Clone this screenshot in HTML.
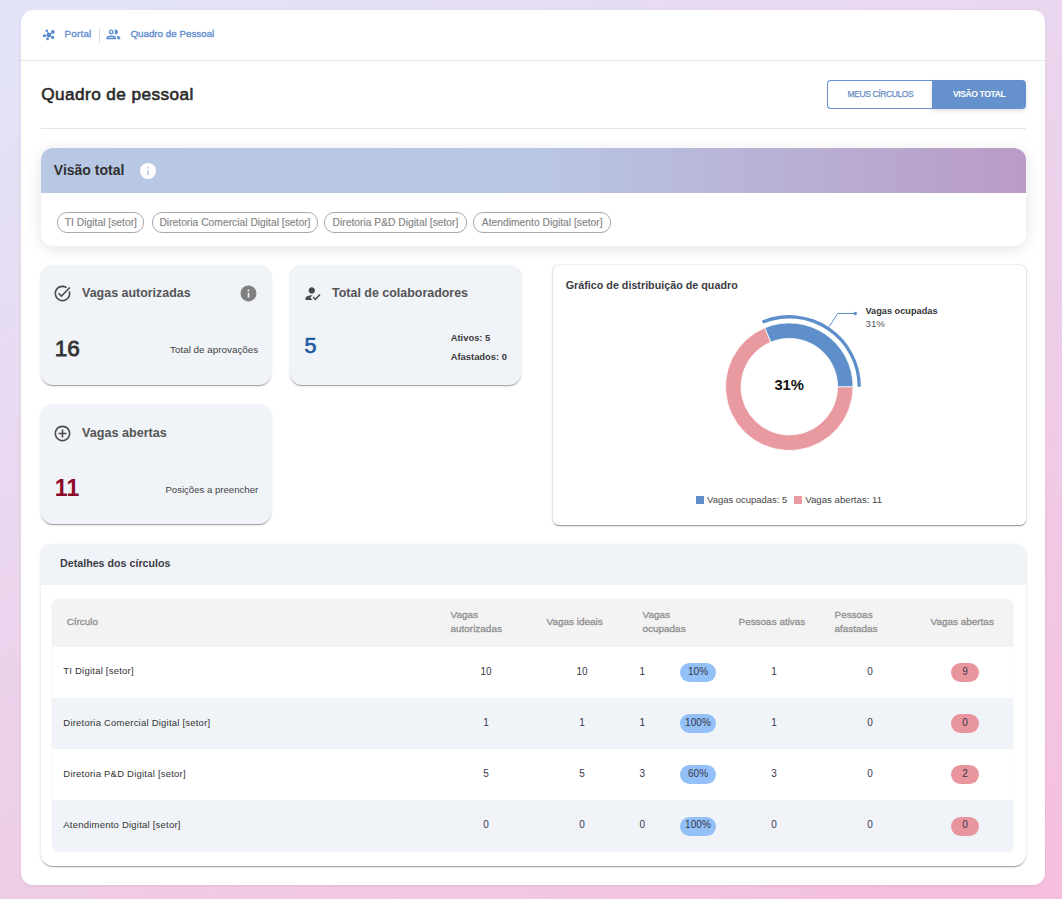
<!DOCTYPE html>
<html><head><meta charset="utf-8"><title>Quadro de pessoal</title>
<style>
html,body{margin:0;padding:0;}
body{width:1062px;height:899px;overflow:hidden;position:relative;font-family:"Liberation Sans",sans-serif;
background:linear-gradient(153deg,#e2e5f7 0%,#f6bedf 100%);}
.t{position:absolute;white-space:nowrap;}
.b{position:absolute;}
</style></head><body>
<div class="b" style="left:21px;top:10px;width:1024px;height:875px;background:#fff;border-radius:12px;box-shadow:0 1px 3px rgba(120,80,140,.12);"></div>
<div class="b" style="left:21px;top:60px;width:1024px;height:1px;background:#e4e4e4;"></div>
<svg class="b" style="left:42px;top:28px" width="14" height="13" viewBox="0 0 14 13">
<g fill="#5a8acf" stroke="#5a8acf" stroke-width="0.9">
<line x1="7" y1="6.9" x2="4.8" y2="2.7"/>
<line x1="7" y1="6.9" x2="10.8" y2="3.9"/>
<line x1="7" y1="6.9" x2="2.4" y2="7.7"/>
<line x1="7" y1="6.9" x2="5.5" y2="10.9"/>
<line x1="7" y1="6.9" x2="10.6" y2="9.4"/>
<circle cx="7" cy="6.9" r="2.3" stroke="none"/>
<circle cx="4.8" cy="2.7" r="1.3" stroke="none"/>
<circle cx="10.8" cy="3.9" r="1.9" stroke="none"/>
<circle cx="2.4" cy="7.7" r="1.5" stroke="none"/>
<circle cx="5.5" cy="10.9" r="1.4" stroke="none"/>
<circle cx="10.6" cy="9.4" r="1.6" stroke="none"/>
</g></svg>
<div class="t" style="left:64.50px;top:28.92px;font-size:9.9px;line-height:9.9px;font-weight:400;color:#5a8acf;-webkit-text-stroke:0.3px #5a8acf;letter-spacing:0.2px;">Portal</div>
<div class="b" style="left:99px;top:27.6px;width:1px;height:15px;background:#dcdcdc;"></div>
<svg class="b" style="left:105.3px;top:26.2px" width="16.7" height="16.7" viewBox="0 0 24 24"><path fill="#5b8bcf" d="M9 13.75c-2.34 0-7 1.17-7 3.5V19h14v-1.75c0-2.33-4.66-3.5-7-3.5zM4.34 17c.84-.58 2.87-1.25 4.66-1.25s3.820.67 4.66 1.25H4.34zM9 12c1.93 0 3.5-1.57 3.5-3.5S10.93 5 9 5 5.5 6.57 5.5 8.5 7.07 12 9 12zm0-5c.83 0 1.5.67 1.5 1.5S9.83 10 9 10s-1.5-.67-1.5-1.5S8.170 7 9 7zm7.04 6.81c1.16.84 1.96 1.96 1.96 3.44V19h4v-1.75c0-2.02-3.5-3.17-5.96-3.44zM15 12c1.93 0 3.5-1.57 3.5-3.5S16.93 5 15 5c-.54 0-1.04.13-1.5.35.63.89 1 1.98 1 3.15s-.37 2.26-1 3.15c.46.22.96.350 1.5.35z"/></svg>
<div class="t" style="left:130.40px;top:29.00px;font-size:9.8px;line-height:9.8px;font-weight:400;color:#5a8acf;-webkit-text-stroke:0.3px #5a8acf;">Quadro de Pessoal</div>
<div class="t" style="left:41.30px;top:85.54px;font-size:17.2px;line-height:17.2px;font-weight:400;color:#2a2a2a;-webkit-text-stroke:0.6px #2a2a2a;letter-spacing:0.42px;">Quadro de pessoal</div>
<div class="b" style="left:827px;top:80px;width:105px;height:29px;box-sizing:border-box;border:1px solid #6592cc;border-right:none;border-radius:4px 0 0 4px;background:#fff;"></div>
<div class="b" style="left:932px;top:80px;width:94px;height:29px;background:#6592cc;border-radius:0 4px 4px 0;box-shadow:0 2px 4px rgba(0,0,0,.12);"></div>
<div class="t" style="left:827.90px;width:105px;top:90.10px;font-size:8.5px;line-height:8.5px;font-weight:400;color:#6a8ec4;text-align:center;-webkit-text-stroke:0.25px #6a8ec4;letter-spacing:-0.4px;">MEUS CÍRCULOS</div>
<div class="t" style="left:932.20px;width:94px;top:90.02px;font-size:8.6px;line-height:8.6px;font-weight:700;color:#fff;text-align:center;letter-spacing:-0.4px;">VISÃO TOTAL</div>
<div class="b" style="left:41px;top:128px;width:985px;height:1px;background:#e6e6e6;"></div>
<div class="b" style="left:41px;top:148px;width:985px;height:98px;background:#fff;border-radius:12px;box-shadow:0 3px 16px rgba(0,0,0,.11);overflow:hidden;"></div>
<div class="b" style="left:41px;top:148px;width:985px;height:44.5px;border-radius:12px 12px 0 0;background:linear-gradient(90deg,#b8c8e4 0%,#b9c7e4 50%,#b99bc6 100%);"></div>
<div class="t" style="left:53.80px;top:163.15px;font-size:14px;line-height:14px;font-weight:700;color:#303030;">Visão total</div>
<svg class="b" style="left:139.6px;top:162.5px" width="16" height="16" viewBox="0 0 16 16"><circle cx="8" cy="8" r="8" fill="#fff"/><rect x="7.1" y="7.5" width="1.6" height="4.8" rx="0.8" fill="#b6c5e3"/><circle cx="7.9" cy="4.8" r="1" fill="#b6c5e3"/></svg>
<div class="b" style="left:57.4px;top:212.4px;width:87.0px;height:20.3px;box-sizing:border-box;border:1px solid #a8a8a8;border-radius:10px;"></div>
<div class="t" style="left:57.40px;width:87.0px;top:217.88px;font-size:10.3px;line-height:10.3px;font-weight:400;color:#858585;text-align:center;-webkit-text-stroke:0.15px #858585;">TI Digital [setor]</div>
<div class="b" style="left:152.3px;top:212.4px;width:165.3px;height:20.3px;box-sizing:border-box;border:1px solid #a8a8a8;border-radius:10px;"></div>
<div class="t" style="left:152.30px;width:165.3px;top:217.88px;font-size:10.3px;line-height:10.3px;font-weight:400;color:#858585;text-align:center;-webkit-text-stroke:0.15px #858585;">Diretoria Comercial Digital [setor]</div>
<div class="b" style="left:324px;top:212.4px;width:142.9px;height:20.3px;box-sizing:border-box;border:1px solid #a8a8a8;border-radius:10px;"></div>
<div class="t" style="left:324.00px;width:142.89999999999998px;top:217.88px;font-size:10.3px;line-height:10.3px;font-weight:400;color:#858585;text-align:center;-webkit-text-stroke:0.15px #858585;">Diretoria P&amp;D Digital [setor]</div>
<div class="b" style="left:473.4px;top:212.4px;width:137.6px;height:20.3px;box-sizing:border-box;border:1px solid #a8a8a8;border-radius:10px;"></div>
<div class="t" style="left:473.40px;width:137.60000000000002px;top:217.88px;font-size:10.3px;line-height:10.3px;font-weight:400;color:#858585;text-align:center;-webkit-text-stroke:0.15px #858585;">Atendimento Digital [setor]</div>
<div class="b" style="left:40.5px;top:265px;width:230.5px;height:120px;background:#f0f3f8;border-radius:12px;box-shadow:0 2px 1px -1px rgba(0,0,0,.2),0 1px 1px 0 rgba(0,0,0,.14),0 1px 3px 0 rgba(0,0,0,.12);"></div>
<div class="b" style="left:289.5px;top:265px;width:231.2px;height:120px;background:#f0f3f8;border-radius:12px;box-shadow:0 2px 1px -1px rgba(0,0,0,.2),0 1px 1px 0 rgba(0,0,0,.14),0 1px 3px 0 rgba(0,0,0,.12);"></div>
<div class="b" style="left:40.5px;top:404px;width:230.5px;height:120px;background:#f0f3f8;border-radius:12px;box-shadow:0 2px 1px -1px rgba(0,0,0,.2),0 1px 1px 0 rgba(0,0,0,.14),0 1px 3px 0 rgba(0,0,0,.12);"></div>
<svg class="b" style="left:53.25px;top:283.65px" width="19" height="19" viewBox="0 0 24 24"><path fill="#4a4a4a" d="M22 5.18 10.59 16.6l-4.24-4.24 1.41-1.41 2.83 2.83 10-10L22 5.18zm-2.21 5.04c.13.57.21 1.17.21 1.78 0 4.42-3.58 8-8 8s-8-3.58-8-8 3.58-8 8-8c1.58 0 3.04.46 4.28 1.25l1.44-1.44C16.1 2.67 14.13 2 12 2 6.48 2 2 6.48 2 12s4.48 10 10 10 10-4.48 10-10c0-1.19-.22-2.33-.6-3.39l-1.61 1.61z"/></svg>
<div class="t" style="left:82.10px;top:286.56px;font-size:12.45px;line-height:12.45px;font-weight:700;color:#555;">Vagas autorizadas</div>
<svg class="b" style="left:239px;top:284.1px" width="19" height="19" viewBox="0 0 24 24"><path fill="#808080" d="M12 2C6.48 2 2 6.48 2 12s4.48 10 10 10 10-4.48 10-10S17.52 2 12 2zm1 15h-2v-6h2v6zm0-8h-2V7h2v2z"/></svg>
<div class="t" style="left:54.80px;top:338.17px;font-size:22.6px;line-height:22.6px;font-weight:400;color:#333;-webkit-text-stroke:0.8px #333;">16</div>
<div class="t" style="right:803.80px;top:344.56px;font-size:9.85px;line-height:9.85px;font-weight:400;color:#444;text-align:right;">Total de aprovações</div>
<svg class="b" style="left:302.9px;top:283.9px" width="19.2" height="19.2" viewBox="0 0 24 24"><path fill="#4a4a4a" d="M9 17l3-2.94c-.39-.04-.68-.06-1-.06-2.67 0-8 1.34-8 4v2h9l-3-3zm2-5c2.21 0 4-1.79 4-4s-1.79-4-4-4-4 1.79-4 4 1.79 4 4 4m4.47 8.5L12 17l1.4-1.41 2.07 2.08 5.13-5.17 1.4 1.41z"/></svg>
<div class="t" style="left:332.10px;top:286.56px;font-size:12.45px;line-height:12.45px;font-weight:700;color:#555;">Total de colaboradores</div>
<div class="t" style="left:304.60px;top:336.00px;font-size:21.5px;line-height:21.5px;font-weight:400;color:#1d5b9e;-webkit-text-stroke:0.7px #1d5b9e;">5</div>
<div class="t" style="left:450.70px;top:332.74px;font-size:9.4px;line-height:9.4px;font-weight:700;color:#3a3a3a;">Ativos: 5</div>
<div class="t" style="left:450.70px;top:351.54px;font-size:9.4px;line-height:9.4px;font-weight:700;color:#3a3a3a;">Afastados: 0</div>
<svg class="b" style="left:53.2px;top:423.8px" width="19" height="19" viewBox="0 0 24 24"><path fill="#4a4a4a" d="M13 7h-2v4H7v2h4v4h2v-4h4v-2h-4V7zm-1-5C6.48 2 2 6.48 2 12s4.48 10 10 10 10-4.48 10-10S17.52 2 12 2zm0 18c-4.41 0-8-3.59-8-8s3.59-8 8-8 8 3.59 8 8-3.59 8-8 8z"/></svg>
<div class="t" style="left:82.10px;top:426.53px;font-size:12.6px;line-height:12.6px;font-weight:700;color:#555;">Vagas abertas</div>
<div class="t" style="left:54.80px;top:476.93px;font-size:23px;line-height:23px;font-weight:700;color:#8b0a2a;letter-spacing:0.3px;">11</div>
<div class="t" style="right:803.80px;top:484.77px;font-size:9.6px;line-height:9.6px;font-weight:400;color:#444;text-align:right;">Posições a preencher</div>
<div class="b" style="left:553px;top:265px;width:472.5px;height:259.5px;background:#fff;border-radius:6px;box-shadow:0 0 1.5px rgba(0,0,0,.25),0 2px 1px -1px rgba(0,0,0,.2),0 1px 1px 0 rgba(0,0,0,.14),0 1px 3px 0 rgba(0,0,0,.12);"></div>
<div class="t" style="left:565.70px;top:280.40px;font-size:10.75px;line-height:10.75px;font-weight:700;color:#3c3c44;">Gráfico de distribuição de quadro</div>
<svg class="b" style="left:0;top:0" width="1062" height="899" viewBox="0 0 1062 899"><path d="M853.10,386.70 A63.8,63.8 0 1 1 764.88,327.76 L770.82,342.08 A48.3,48.3 0 1 0 837.60,386.70 Z" fill="#e99aa1" stroke="#fff" stroke-width="0.8"/><path d="M764.88,327.76 A63.8,63.8 0 0 1 853.10,386.70 L837.60,386.70 A48.3,48.3 0 0 0 770.82,342.08 Z" fill="#5f8fcb" stroke="#fff" stroke-width="0.8"/><path d="M761.90,320.55 A71.6,71.6 0 0 1 860.90,386.70 L857.60,386.70 A68.3,68.3 0 0 0 763.16,323.60 Z" fill="#5f8fcb"/><polyline points="829,326.8 837.8,313.5 855.3,313.5" fill="none" stroke="#5f8fcb" stroke-width="1"/><circle cx="855.3" cy="313.5" r="1.7" fill="#5f8fcb"/></svg>
<div class="t" style="left:759.20px;width:60px;top:377.87px;font-size:14.8px;line-height:14.8px;font-weight:700;color:#111;text-align:center;">31%</div>
<div class="t" style="left:865.50px;top:307.01px;font-size:9.2px;line-height:9.2px;font-weight:700;color:#333;">Vagas ocupadas</div>
<div class="t" style="left:865.50px;top:318.79px;font-size:9.7px;line-height:9.7px;font-weight:400;color:#555;">31%</div>
<div class="b" style="left:696px;top:496.3px;width:8px;height:8px;background:#5f8fcb;"></div>
<div class="t" style="left:707.10px;top:495.39px;font-size:9.46px;line-height:9.46px;font-weight:400;color:#444;">Vagas ocupadas: 5</div>
<div class="b" style="left:794.2px;top:496.3px;width:8px;height:8px;background:#e99aa1;"></div>
<div class="t" style="left:805.20px;top:495.22px;font-size:9.66px;line-height:9.66px;font-weight:400;color:#444;">Vagas abertas: 11</div>
<div class="b" style="left:41px;top:544px;width:985px;height:322px;background:#fff;border-radius:9px 9px 12px 12px;overflow:hidden;box-shadow:0 2px 1px -1px rgba(0,0,0,.2),0 1px 1px 0 rgba(0,0,0,.14),0 1px 3px 0 rgba(0,0,0,.12);"></div>
<div class="b" style="left:41px;top:544px;width:985px;height:41px;background:#f0f3f8;border-radius:9px 9px 0 0;"></div>
<div class="t" style="left:60.00px;top:558.34px;font-size:10.7px;line-height:10.7px;font-weight:700;color:#3c3c44;">Detalhes dos círculos</div>
<div class="b" style="left:52px;top:598.8px;width:961px;height:253.7px;background:#fff;border-radius:6px;overflow:hidden;box-shadow:0 0 0 0.5px rgba(0,0,0,.04);"></div>
<div class="b" style="left:52px;top:598.8px;width:961px;height:48.2px;background:#f3f3f3;border-radius:6px 6px 0 0;"></div>
<div class="b" style="left:52px;top:647px;width:961px;height:51.2px;background:#fff;"></div>
<div class="b" style="left:52px;top:698.2px;width:961px;height:51.0px;background:#f0f3f8;"></div>
<div class="b" style="left:52px;top:749.2px;width:961px;height:51.0px;background:#fff;"></div>
<div class="b" style="left:52px;top:800.2px;width:961px;height:52.1px;background:#f0f3f8;border-radius:0 0 6px 6px;"></div>
<div class="t" style="left:66.70px;top:616.62px;font-size:9.9px;line-height:9.9px;font-weight:400;color:#8f8f8f;-webkit-text-stroke:0.3px #8f8f8f;">Círculo</div>
<div class="t" style="left:450.50px;top:609.88px;font-size:9.95px;line-height:9.95px;font-weight:400;color:#8f8f8f;-webkit-text-stroke:0.3px #8f8f8f;">Vagas</div>
<div class="t" style="left:450.50px;top:623.58px;font-size:9.95px;line-height:9.95px;font-weight:400;color:#8f8f8f;-webkit-text-stroke:0.3px #8f8f8f;">autorizadas</div>
<div class="t" style="left:546.50px;top:616.58px;font-size:9.95px;line-height:9.95px;font-weight:400;color:#8f8f8f;-webkit-text-stroke:0.3px #8f8f8f;">Vagas ideais</div>
<div class="t" style="left:642.50px;top:609.88px;font-size:9.95px;line-height:9.95px;font-weight:400;color:#8f8f8f;-webkit-text-stroke:0.3px #8f8f8f;">Vagas</div>
<div class="t" style="left:642.50px;top:623.58px;font-size:9.95px;line-height:9.95px;font-weight:400;color:#8f8f8f;-webkit-text-stroke:0.3px #8f8f8f;">ocupadas</div>
<div class="t" style="left:738.50px;top:616.58px;font-size:9.95px;line-height:9.95px;font-weight:400;color:#8f8f8f;-webkit-text-stroke:0.3px #8f8f8f;">Pessoas ativas</div>
<div class="t" style="left:834.50px;top:609.88px;font-size:9.95px;line-height:9.95px;font-weight:400;color:#8f8f8f;-webkit-text-stroke:0.3px #8f8f8f;">Pessoas</div>
<div class="t" style="left:834.50px;top:623.58px;font-size:9.95px;line-height:9.95px;font-weight:400;color:#8f8f8f;-webkit-text-stroke:0.3px #8f8f8f;">afastadas</div>
<div class="t" style="left:930.50px;top:616.58px;font-size:9.95px;line-height:9.95px;font-weight:400;color:#8f8f8f;-webkit-text-stroke:0.3px #8f8f8f;">Vagas abertas</div>
<div class="t" style="left:63.30px;top:666.36px;font-size:9.5px;line-height:9.5px;font-weight:400;color:#333;letter-spacing:0.22px;">TI Digital [setor]</div>
<div class="t" style="left:456.00px;width:60px;top:666.93px;font-size:10.0px;line-height:10.0px;font-weight:400;color:#36364a;text-align:center;letter-spacing:0.05px;">10</div>
<div class="t" style="left:552.00px;width:60px;top:666.93px;font-size:10.0px;line-height:10.0px;font-weight:400;color:#36364a;text-align:center;letter-spacing:0.05px;">10</div>
<div class="t" style="left:639.60px;top:666.93px;font-size:10.0px;line-height:10.0px;font-weight:400;color:#36364a;letter-spacing:0.05px;">1</div>
<div class="b" style="left:680px;top:663.1px;width:36px;height:19px;background:#92c0f7;border-radius:10px;"></div>
<div class="t" style="left:680.00px;width:36px;top:666.93px;font-size:10.0px;line-height:10.0px;font-weight:400;color:#36364a;text-align:center;letter-spacing:0.05px;">10%</div>
<div class="t" style="left:744.00px;width:60px;top:666.93px;font-size:10.0px;line-height:10.0px;font-weight:400;color:#36364a;text-align:center;letter-spacing:0.05px;">1</div>
<div class="t" style="left:840.00px;width:60px;top:666.93px;font-size:10.0px;line-height:10.0px;font-weight:400;color:#36364a;text-align:center;letter-spacing:0.05px;">0</div>
<div class="b" style="left:951px;top:663.1px;width:28px;height:19px;background:#e8959e;border-radius:10px;"></div>
<div class="t" style="left:951.00px;width:28px;top:666.93px;font-size:10.0px;line-height:10.0px;font-weight:400;color:#36364a;text-align:center;letter-spacing:0.05px;">9</div>
<div class="t" style="left:63.30px;top:717.56px;font-size:9.5px;line-height:9.5px;font-weight:400;color:#333;letter-spacing:0.22px;">Diretoria Comercial Digital [setor]</div>
<div class="t" style="left:456.00px;width:60px;top:718.13px;font-size:10.0px;line-height:10.0px;font-weight:400;color:#36364a;text-align:center;letter-spacing:0.05px;">1</div>
<div class="t" style="left:552.00px;width:60px;top:718.13px;font-size:10.0px;line-height:10.0px;font-weight:400;color:#36364a;text-align:center;letter-spacing:0.05px;">1</div>
<div class="t" style="left:639.60px;top:718.13px;font-size:10.0px;line-height:10.0px;font-weight:400;color:#36364a;letter-spacing:0.05px;">1</div>
<div class="b" style="left:680px;top:714.2px;width:36px;height:19px;background:#92c0f7;border-radius:10px;"></div>
<div class="t" style="left:680.00px;width:36px;top:718.13px;font-size:10.0px;line-height:10.0px;font-weight:400;color:#36364a;text-align:center;letter-spacing:0.05px;">100%</div>
<div class="t" style="left:744.00px;width:60px;top:718.13px;font-size:10.0px;line-height:10.0px;font-weight:400;color:#36364a;text-align:center;letter-spacing:0.05px;">1</div>
<div class="t" style="left:840.00px;width:60px;top:718.13px;font-size:10.0px;line-height:10.0px;font-weight:400;color:#36364a;text-align:center;letter-spacing:0.05px;">0</div>
<div class="b" style="left:951px;top:714.2px;width:28px;height:19px;background:#e8959e;border-radius:10px;"></div>
<div class="t" style="left:951.00px;width:28px;top:718.13px;font-size:10.0px;line-height:10.0px;font-weight:400;color:#36364a;text-align:center;letter-spacing:0.05px;">0</div>
<div class="t" style="left:63.30px;top:768.56px;font-size:9.5px;line-height:9.5px;font-weight:400;color:#333;letter-spacing:0.22px;">Diretoria P&amp;D Digital [setor]</div>
<div class="t" style="left:456.00px;width:60px;top:769.13px;font-size:10.0px;line-height:10.0px;font-weight:400;color:#36364a;text-align:center;letter-spacing:0.05px;">5</div>
<div class="t" style="left:552.00px;width:60px;top:769.13px;font-size:10.0px;line-height:10.0px;font-weight:400;color:#36364a;text-align:center;letter-spacing:0.05px;">5</div>
<div class="t" style="left:639.60px;top:769.13px;font-size:10.0px;line-height:10.0px;font-weight:400;color:#36364a;letter-spacing:0.05px;">3</div>
<div class="b" style="left:680px;top:765.2px;width:36px;height:19px;background:#92c0f7;border-radius:10px;"></div>
<div class="t" style="left:680.00px;width:36px;top:769.13px;font-size:10.0px;line-height:10.0px;font-weight:400;color:#36364a;text-align:center;letter-spacing:0.05px;">60%</div>
<div class="t" style="left:744.00px;width:60px;top:769.13px;font-size:10.0px;line-height:10.0px;font-weight:400;color:#36364a;text-align:center;letter-spacing:0.05px;">3</div>
<div class="t" style="left:840.00px;width:60px;top:769.13px;font-size:10.0px;line-height:10.0px;font-weight:400;color:#36364a;text-align:center;letter-spacing:0.05px;">0</div>
<div class="b" style="left:951px;top:765.2px;width:28px;height:19px;background:#e8959e;border-radius:10px;"></div>
<div class="t" style="left:951.00px;width:28px;top:769.13px;font-size:10.0px;line-height:10.0px;font-weight:400;color:#36364a;text-align:center;letter-spacing:0.05px;">2</div>
<div class="t" style="left:63.30px;top:819.56px;font-size:9.5px;line-height:9.5px;font-weight:400;color:#333;letter-spacing:0.22px;">Atendimento Digital [setor]</div>
<div class="t" style="left:456.00px;width:60px;top:820.13px;font-size:10.0px;line-height:10.0px;font-weight:400;color:#36364a;text-align:center;letter-spacing:0.05px;">0</div>
<div class="t" style="left:552.00px;width:60px;top:820.13px;font-size:10.0px;line-height:10.0px;font-weight:400;color:#36364a;text-align:center;letter-spacing:0.05px;">0</div>
<div class="t" style="left:639.60px;top:820.13px;font-size:10.0px;line-height:10.0px;font-weight:400;color:#36364a;letter-spacing:0.05px;">0</div>
<div class="b" style="left:680px;top:816.8px;width:36px;height:19px;background:#92c0f7;border-radius:10px;"></div>
<div class="t" style="left:680.00px;width:36px;top:820.13px;font-size:10.0px;line-height:10.0px;font-weight:400;color:#36364a;text-align:center;letter-spacing:0.05px;">100%</div>
<div class="t" style="left:744.00px;width:60px;top:820.13px;font-size:10.0px;line-height:10.0px;font-weight:400;color:#36364a;text-align:center;letter-spacing:0.05px;">0</div>
<div class="t" style="left:840.00px;width:60px;top:820.13px;font-size:10.0px;line-height:10.0px;font-weight:400;color:#36364a;text-align:center;letter-spacing:0.05px;">0</div>
<div class="b" style="left:951px;top:816.8px;width:28px;height:19px;background:#e8959e;border-radius:10px;"></div>
<div class="t" style="left:951.00px;width:28px;top:820.13px;font-size:10.0px;line-height:10.0px;font-weight:400;color:#36364a;text-align:center;letter-spacing:0.05px;">0</div>

</body></html>
